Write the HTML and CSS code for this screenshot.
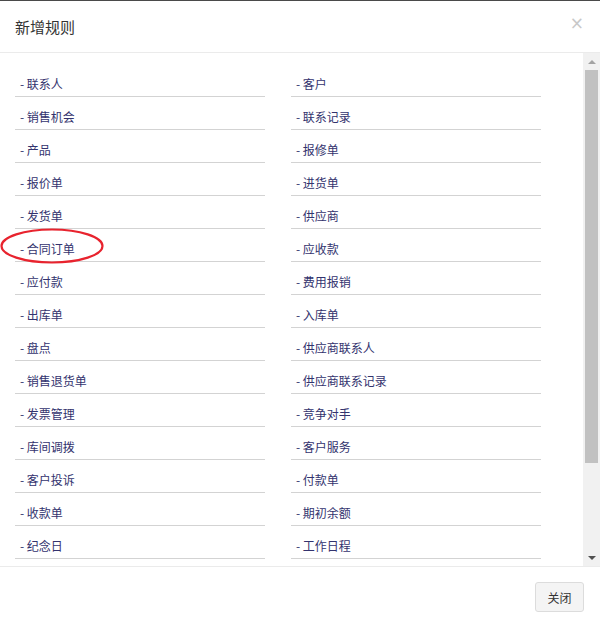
FILE: index.html
```html
<!DOCTYPE html>
<html lang="zh-CN">
<head>
    <meta charset="UTF-8">
    <meta name="viewport" content="width=device-width, initial-scale=1.0">
    <title>新增规则</title>
    <link rel="stylesheet" href="styles.css">
</head>
<body>
    <div class="modal">
        <div class="modal-header">
            <h4 class="modal-title">新增规则</h4>
            <span class="close">&times;</span>
        </div>

        <div class="modal-body">
            <ul class="rule-list">
                <li>- 联系人</li>
                <li>- 客户</li>
                <li>- 销售机会</li>
                <li>- 联系记录</li>
                <li>- 产品</li>
                <li>- 报修单</li>
                <li>- 报价单</li>
                <li>- 进货单</li>
                <li>- 发货单</li>
                <li>- 供应商</li>
                <li>- 合同订单</li>
                <li>- 应收款</li>
                <li>- 应付款</li>
                <li>- 费用报销</li>
                <li>- 出库单</li>
                <li>- 入库单</li>
                <li>- 盘点</li>
                <li>- 供应商联系人</li>
                <li>- 销售退货单</li>
                <li>- 供应商联系记录</li>
                <li>- 发票管理</li>
                <li>- 竞争对手</li>
                <li>- 库间调拨</li>
                <li>- 客户服务</li>
                <li>- 客户投诉</li>
                <li>- 付款单</li>
                <li>- 收款单</li>
                <li>- 期初余额</li>
                <li>- 纪念日</li>
                <li>- 工作日程</li>
            </ul>

            <div class="scrollbar">
                <div class="scroll-btn"><span class="arrow-up"></span></div>
                <div class="scroll-track"><div class="scroll-thumb"></div></div>
                <div class="scroll-btn"><span class="arrow-down"></span></div>
            </div>
        </div>

        <div class="modal-footer">
            <button type="button" class="btn">关闭</button>
        </div>

        <svg class="mark" width="110" height="44" viewBox="0 0 110 44">
            <ellipse cx="52" cy="22" rx="50.5" ry="16.5" fill="none" stroke="#e8232e" stroke-width="2.2"/>
        </svg>
    </div>
</body>
</html>
```

FILE: styles.css
```css
* {
    box-sizing: border-box;
    margin: 0;
    padding: 0;
    font-family: "Noto Sans CJK SC", "Noto Sans", sans-serif;
}

body {
    background: #fff;
}

.modal {
    position: relative;
    width: 600px;
    height: 627px;
    border-top: 1px solid #4a4a4a;
    background: #fff;
}

.modal-header {
    height: 52px;
    border-bottom: 1px solid #ebebeb;
    display: flex;
    align-items: center;
    justify-content: space-between;
    padding: 0 16px 1px 15px;
}

.modal-title {
    font-size: 15px;
    font-weight: normal;
    color: #333;
}

.close {
    font-family: "DejaVu Sans", sans-serif;
    font-size: 17px;
    line-height: 1;
    color: #c8c8c8;
    margin-bottom: 6px;
}

.modal-body {
    height: 513px;
    display: flex;
}

.rule-list {
    flex: 1;
    overflow: hidden;
    list-style: none;
    display: grid;
    grid-template-columns: 250px 250px;
    grid-auto-rows: 33px;
    column-gap: 26px;
    align-content: start;
    padding: 11px 0 0 15px;
}

.rule-list li {
    border-bottom: 1px solid #d3d3d3;
    padding: 11px 0 0 5px;
    font-size: 12px;
    line-height: 18px;
    color: #33336e;
}

.scrollbar {
    width: 17px;
    background: #f1f1f1;
    display: flex;
    flex-direction: column;
}

.scroll-btn {
    height: 17px;
    display: flex;
    justify-content: center;
    align-items: center;
}

.arrow-up {
    border-left: 4px solid transparent;
    border-right: 4px solid transparent;
    border-bottom: 4px solid #a3a3a3;
}

.arrow-down {
    border-left: 4px solid transparent;
    border-right: 4px solid transparent;
    border-top: 4px solid #505050;
}

.scroll-track {
    flex: 1;
    padding: 0 2px;
}

.scroll-thumb {
    height: 393px;
    background: #c1c1c1;
}

.modal-footer {
    border-top: 1px solid #ebebeb;
    display: flex;
    justify-content: flex-end;
    padding: 15px 16px 0 0;
}

.btn {
    width: 49px;
    height: 30px;
    background: #f4f4f4;
    border: 1px solid #dcdcdc;
    border-radius: 3px;
    font-size: 12px;
    color: #333;
}

.mark {
    position: absolute;
    left: 0;
    top: 223px;
}
```
